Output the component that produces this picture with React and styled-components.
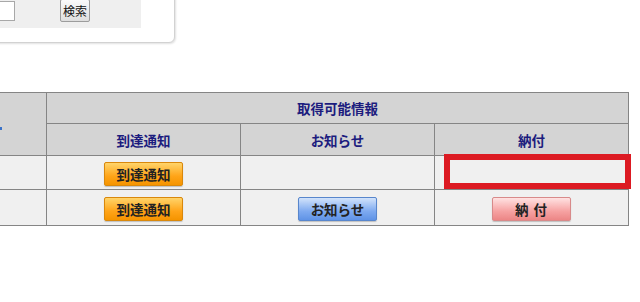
import React from 'react';
import styled, { createGlobalStyle, css } from 'styled-components';

const GlobalStyle = createGlobalStyle`
  html, body {
    margin: 0;
    padding: 0;
    background: #fff;
    overflow: hidden;
  }
  body {
    font-family: "Noto Sans CJK JP", "Liberation Sans", sans-serif;
  }
`;

const Page = styled.div`
  width: 640px;
  height: 302px;
  overflow: hidden;
`;

// 検索ボックス (左側は画面外)
const SearchBox = styled.div`
  margin: -20px 0 0 -40px;
  width: 180px;
  padding: 0 33px 14px 0;
  background: #fff;
  border: 1px solid #d2d2d2;
  border-radius: 6px;
  box-shadow: 1px 1px 2px rgba(0, 0, 0, 0.12);
`;

const SearchPanel = styled.div`
  height: 41px;
  background: #efefef;
  display: flex;
  align-items: flex-end;
  padding-bottom: 6px;
`;

const SearchInput = styled.input`
  width: 54px;
  height: 20px;
  box-sizing: border-box;
  margin: 0 0 1px 0;
  border: 1px solid #a8a8a8;
  background: #fff;
`;

const SearchButton = styled.button`
  margin-left: 45px;
  width: 30px;
  height: 23px;
  padding: 0;
  font-family: "Noto Sans CJK JP", sans-serif;
  font-size: 12px;
  color: #111;
  border: 1px solid #9c9c9c;
  border-radius: 2px;
  background: linear-gradient(#fafafa, #dedede);
`;

const Table = styled.table`
  margin: 49px 0 0 -100px;
  border-collapse: collapse;
  table-layout: fixed;
  width: 728px;
`;

const HeadCell = styled.th`
  background: #d4d4d4;
  border: 1px solid #858585;
  color: #1c1c7e;
  font-size: 13.5px;
  font-weight: bold;
  text-align: center;
  height: ${(p) => p.h}px;
  padding: 0;
`;

const SortMark = styled.span`
  display: inline-block;
  width: 3px;
  height: 3px;
  margin: 6px 44px 0 0;
  background: #3a72c8;
`;

const Cell = styled.td`
  position: relative;
  background: #f0f0f0;
  border: 1px solid #858585;
  text-align: center;
  height: ${(p) => p.h}px;
  padding: 0;
`;

const variants = {
  orange: css`
    background: linear-gradient(#ffd46a, #ffa418 60%, #f59400);
    border-color: #d9880c;
  `,
  blue: css`
    background: linear-gradient(#d2e3fb, #7eaaf0 60%, #5f93e6);
    border-color: #5886cc;
  `,
  pink: css`
    background: linear-gradient(#ffe2e2, #f6a2a2 60%, #ec8686);
    border-color: #d88a8a;
  `,
};

const ActionButton = styled.button`
  width: 79px;
  height: 24px;
  padding: 0;
  border: 1px solid;
  border-radius: 2px;
  font-family: "Noto Sans CJK JP", sans-serif;
  font-size: 13.5px;
  font-weight: bold;
  color: #222;
  letter-spacing: ${(p) => (p.wide ? '1px' : '0')};
  vertical-align: middle;
  box-shadow: 0 1px 1px rgba(0, 0, 0, 0.2);
  ${(p) => variants[p.variant]}
`;

const Highlight = styled.div`
  position: absolute;
  left: 9px;
  top: -2px;
  width: 187px;
  height: 35px;
  box-sizing: border-box;
  border: 6px solid #dc1a22;
`;

const rows = [
  { notice: true, info: false, pay: false, marked: true },
  { notice: true, info: true, pay: true, marked: false },
];

const App = () => {
  return (
    <Page>
      <GlobalStyle />
      <SearchBox>
        <SearchPanel>
          <SearchInput type="text" />
          <SearchButton type="button">検索</SearchButton>
        </SearchPanel>
      </SearchBox>

      <Table>
        <colgroup>
          <col style={{ width: 146 }} />
          <col style={{ width: 194 }} />
          <col style={{ width: 194 }} />
          <col style={{ width: 194 }} />
        </colgroup>
        <thead>
          <tr>
            <HeadCell rowSpan={2} h={30} style={{ textAlign: 'right' }}>
              <SortMark />
            </HeadCell>
            <HeadCell colSpan={3} h={30}>取得可能情報</HeadCell>
          </tr>
          <tr>
            <HeadCell h={31}>到達通知</HeadCell>
            <HeadCell h={31}>お知らせ</HeadCell>
            <HeadCell h={31}>納付</HeadCell>
          </tr>
        </thead>
        <tbody>
          {rows.map((r, i) => (
            <tr key={i}>
              <Cell h={i === 0 ? 33 : 35} />
              <Cell>
                {r.notice && <ActionButton variant="orange">到達通知</ActionButton>}
              </Cell>
              <Cell>
                {r.info && <ActionButton variant="blue">お知らせ</ActionButton>}
              </Cell>
              <Cell>
                {r.pay && <ActionButton variant="pink" wide>納 付</ActionButton>}
                {r.marked && <Highlight />}
              </Cell>
            </tr>
          ))}
        </tbody>
      </Table>
    </Page>
  );
};

export default App;
